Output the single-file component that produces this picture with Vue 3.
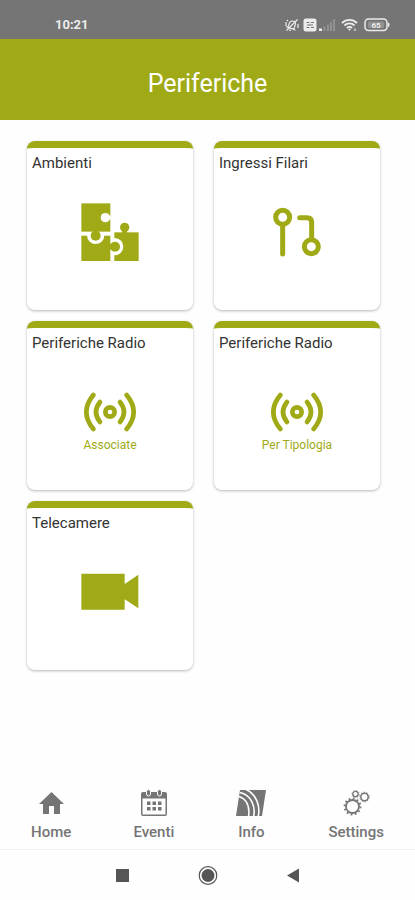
<script setup>
const cards = [
  { key: 'ambienti', title: 'Ambienti', icon: 'puzzle' },
  { key: 'ingressi', title: 'Ingressi Filari', icon: 'wired' },
  { key: 'radio-associate', title: 'Periferiche Radio', icon: 'radio', caption: 'Associate' },
  { key: 'radio-tipologia', title: 'Periferiche Radio', icon: 'radio', caption: 'Per Tipologia' },
  { key: 'telecamere', title: 'Telecamere', icon: 'camera' },
];

const tabs = [
  { key: 'home', label: 'Home' },
  { key: 'eventi', label: 'Eventi' },
  { key: 'info', label: 'Info' },
  { key: 'settings', label: 'Settings' },
];
</script>

<template>
  <div class="app">
    <div class="status">
      <span class="status__time">10:21</span>
      <div class="status__icons">
        <svg width="14" height="14" viewBox="0 0 14 14" fill="none" stroke="currentColor" stroke-width="1.2">
          <path d="M4 9.500V6a3 3 0 0 1 6 0v3.500l1 1H3zM6 12.500h2" transform="rotate(20 7 7)" />
          <path d="M1.500 12.500 12.500 1.500M1 4v4M13 6v4M3 2l-1 1" />
        </svg>
        <svg width="14" height="14" viewBox="0 0 14 14">
          <rect x="0.500" y="0.500" width="13" height="13" rx="2.500" fill="currentColor" />
          <path d="M3.500 4.500h3M8 4.500h3M3.500 9.500h3M8 9.500h3M4 7h6" stroke="#757575" stroke-width="1.200" />
        </svg>
        <svg class="status__signal" width="16" height="14" viewBox="0 0 16 14" fill="currentColor">
          <path d="M0 10.500h3V13H0z" />
          <path d="M4.500 8.500h2V13h-2zM8 6.500h2V13H8zM11 4h2v9h-2zM14 1h2v12h-2z" opacity="0.25" />
        </svg>
        <svg class="status__wifi" width="17" height="14" viewBox="0 0 17 14" fill="none" stroke="currentColor" stroke-width="1.900">
          <path d="M1 5a10.500 10.500 0 0 1 15 0M3.500 7.500a7 7 0 0 1 10 0M6 10a3.600 3.600 0 0 1 5 0" />
          <path d="M7 10.800h3L8.500 13z" fill="currentColor" stroke="none" />
          <path d="M14 10.500V13" opacity="0.6" />
        </svg>
        <svg width="26" height="14" viewBox="0 0 26 14">
          <rect x="1" y="1" width="22" height="11.500" rx="3.500" fill="none" stroke="currentColor" stroke-width="1.500" />
          <path d="M24 4.500c2 .5 2 4 0 4.500z" fill="currentColor" />
          <rect x="4" y="3.500" width="16" height="6.500" rx="1.500" fill="currentColor" opacity="0.25" />
          <text x="12" y="9.500" text-anchor="middle" font-size="8" font-weight="700" fill="currentColor">65</text>
        </svg>
      </div>
    </div>

    <header class="header">
      <h1 class="header__title">Periferiche</h1>
    </header>

    <main class="grid">
      <button v-for="card in cards" :key="card.key" type="button" class="card">
        <span class="card__title">{{ card.title }}</span>
        <svg class="card__icon" viewBox="183 205 174 174" aria-hidden="true">
          <g v-if="card.icon === 'puzzle'" fill="currentColor">
            <path d="M283 293h73v86h-73z" />
            <circle cx="314" cy="278" r="14" />
            <path d="M307 284h14v12h-14z" />
            <circle cx="284" cy="336" r="26" fill="#fff" />
            <path d="M184 303h87v76h-87z" />
            <circle cx="285" cy="336" r="15" />
            <path d="M268 328h12v16h-12z" />
            <circle cx="227" cy="302" r="26" fill="#fff" />
            <path d="M184 206h87v85h-87z" />
            <circle cx="227" cy="303" r="15" />
            <circle cx="256" cy="249" r="14" fill="#fff" />
            <path d="M262 243h10v12h-10z" fill="#fff" />
          </g>
          <g
            v-else-if="card.icon === 'wired'"
            fill="none"
            stroke="currentColor"
            stroke-width="15"
            stroke-linecap="round"
            stroke-linejoin="round"
          >
            <circle cx="227" cy="248" r="21" />
            <circle cx="313" cy="336" r="21" />
            <path d="M227 270v88M278 249h22q14 0 14 14v51" />
          </g>
          <g
            v-else-if="card.icon === 'radio'"
            fill="none"
            stroke="currentColor"
            stroke-width="14"
            stroke-linecap="round"
          >
            <circle cx="270" cy="292" r="14" />
            <path d="M240 262q-24 30 0 60M300 262q24 30 0 60" />
            <path d="M220 241q-42 51 0 102M320 241q42 51 0 102" />
          </g>
          <path v-else d="M184 237h130v31l41-28v101l-41-27v31H184z" fill="currentColor" />
        </svg>
        <span v-if="card.caption" class="card__caption">{{ card.caption }}</span>
      </button>
    </main>

    <nav class="tabs">
      <a v-for="tab in tabs" :key="tab.key" href="#" class="tabs__item">
        <svg v-if="tab.key === 'home'" width="30" height="28" viewBox="0 0 30 28" fill="currentColor">
          <path d="M15.500 3 28 15h-4v10h-6v-8h-5v8H7V15H3z" />
        </svg>
        <svg v-else-if="tab.key === 'eventi'" width="30" height="28" viewBox="0 0 30 28" fill="currentColor">
          <path fill-rule="evenodd" d="M4 3h22a2 2 0 0 1 2 2v20a2 2 0 0 1-2 2H4a2 2 0 0 1-2-2V5a2 2 0 0 1 2-2zm-.5 6.500v16h23v-16z" />
          <rect x="7.500" y="0.500" width="4" height="6.500" rx="2" stroke="#fff" />
          <rect x="18.500" y="0.500" width="4" height="6.500" rx="2" stroke="#fff" />
          <path d="M8 12.500h3.500V16H8zM13.500 12.500H17V16h-3.500zM19 12.500h3.500V16H19zM8 18h3.500v3.500H8zM13.500 18H17v3.500h-3.500zM19 18h3.500v3.500H19z" />
        </svg>
        <svg v-else-if="tab.key === 'info'" width="30" height="28" viewBox="0 0 30 28">
          <path d="M4 1h26l-4 26H0z" fill="currentColor" />
          <path
            d="M3 7.500C11 10 14 18 12.500 28M4 3.500C15 6 20 17 17.500 28M10 .5C20 5 25 17 22 28"
            fill="none"
            stroke="#fff"
            stroke-width="1.600"
          />
        </svg>
        <svg v-else width="30" height="28" viewBox="0 0 30 28" fill="none" stroke="currentColor">
          <circle cx="11.500" cy="17.500" r="6.500" stroke-width="1.800" />
          <circle cx="11.500" cy="17.500" r="8" stroke-width="1.800" stroke-dasharray="1.800 2.388" />
          <circle cx="14.500" cy="5" r="2.700" stroke-width="1.300" />
          <circle cx="14.500" cy="5" r="3.600" stroke-width="0.700" stroke-dasharray="1.200 1.627" />
          <circle cx="23.500" cy="8" r="3.700" stroke-width="1.500" />
          <circle cx="23.500" cy="8" r="4.800" stroke-width="0.900" stroke-dasharray="1.400 1.616" />
        </svg>
        <span>{{ tab.label }}</span>
      </a>
    </nav>

    <div class="system">
      <button type="button" class="system__button" aria-label="Recenti">
        <svg width="22" height="22" viewBox="0 0 22 22"><path d="M4 5h13v13H4z" fill="currentColor" /></svg>
      </button>
      <button type="button" class="system__button" aria-label="Home">
        <svg width="22" height="22" viewBox="0 0 22 22">
          <circle cx="11" cy="11.500" r="8.800" fill="none" stroke="currentColor" stroke-width="1.200" />
          <circle cx="11" cy="11.500" r="6.500" fill="currentColor" />
        </svg>
      </button>
      <button type="button" class="system__button" aria-label="Indietro">
        <svg width="22" height="22" viewBox="0 0 22 22"><path d="M17 4.500v14l-12-7z" fill="currentColor" /></svg>
      </button>
    </div>
  </div>
</template>

<style>
body {
  margin: 0;
  background: #fff;
}
</style>

<style scoped>
.app {
  display: flex;
  flex-direction: column;
  min-height: 100vh;
  font-family: Roboto, 'Liberation Sans', sans-serif;
  background: #fefefe;
}

.status {
  display: flex;
  align-items: center;
  justify-content: space-between;
  box-sizing: border-box;
  height: 39px;
  padding: 10px 25px 0 55px;
  color: #ececec;
  background: #757575;
}

.status__time {
  font-size: 13px;
  font-weight: 700;
  line-height: 16px;
}

.status__icons {
  display: flex;
  align-items: center;
  gap: 4px;
}

.status__signal {
  margin-left: -2px;
}

.status__wifi {
  margin: 0 2px;
}

.header {
  display: flex;
  align-items: center;
  justify-content: center;
  height: 81px;
  padding-top: 8px;
  box-sizing: border-box;
  color: #fff;
  background: #a0aa16;
}

.header__title {
  margin: 0;
  font-size: 25px;
  font-weight: 400;
  line-height: 30px;
}

.grid {
  flex: 1;
  display: grid;
  grid-template-columns: 1fr 1fr;
  align-content: start;
  gap: 11px 21px;
  padding: 21px 35px 21px 27px;
}

.card {
  display: flex;
  flex-direction: column;
  align-items: center;
  min-height: 169px;
  padding: 6px 5px;
  border: 0;
  border-top: 7px solid #a0aa16;
  border-radius: 8px;
  color: #a0aa16;
  background: #fff;
  box-shadow: 0 1px 3px rgba(0, 0, 0, 0.28);
  font-family: inherit;
  cursor: pointer;
}

.card__title {
  align-self: stretch;
  font-size: 15px;
  line-height: 18px;
  text-align: left;
  color: #333;
}

.card__icon {
  width: 58px;
  height: 58px;
  margin-top: 31px;
}

.card__caption {
  margin-top: -3px;
  font-size: 12px;
  line-height: 14px;
}

.tabs {
  display: flex;
  justify-content: space-around;
  padding: 0 0 8px;
  border-bottom: 1px solid #f1f1f1;
}

.tabs__item {
  display: flex;
  flex-direction: column;
  align-items: center;
  gap: 6px;
  font-size: 15px;
  font-weight: 500;
  line-height: 18px;
  color: #757575;
  text-decoration: none;
}

.system {
  display: flex;
  align-items: center;
  justify-content: center;
  gap: 63px;
  height: 50px;
}

.system__button {
  display: flex;
  padding: 0;
  border: 0;
  color: #555;
  background: none;
  cursor: pointer;
}
</style>
